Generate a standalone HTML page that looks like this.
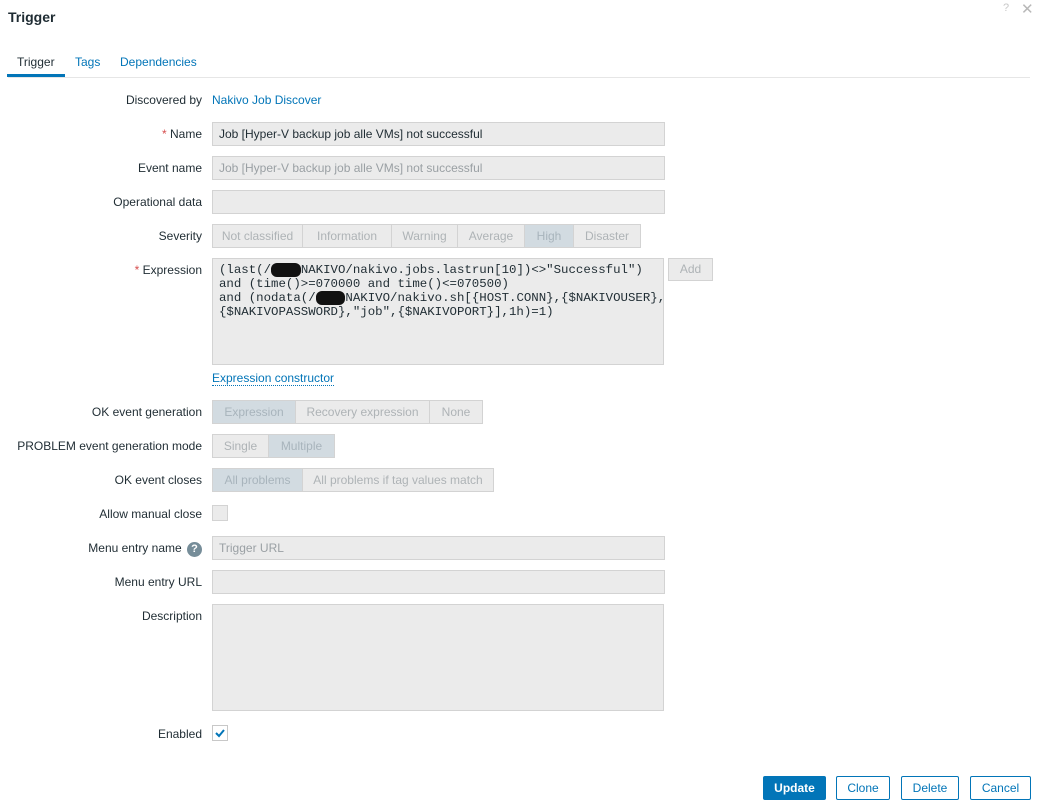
<!DOCTYPE html>
<html><head><style>
body{margin:0;width:1038px;height:809px;background:#fff;font-family:"Liberation Sans",sans-serif;font-size:12px;color:#1f2c33;position:relative;overflow:hidden}
.a{position:absolute}
.lbl{position:absolute;right:836px;text-align:right;white-space:nowrap;line-height:14px}
.in{position:absolute;left:212px;height:22px;background:#ebebeb;border:1px solid #d3d3d3;line-height:22px;padding-left:6px;box-sizing:content-box;width:445px}
.seg{position:absolute;display:flex;height:22px;border:1px solid #d3d3d3;background:#ebebeb}
.seg div{height:22px;line-height:22px;color:#aeb3b6;text-align:center;border-right:1px solid #d3d3d3;box-sizing:border-box}
.seg div:last-child{border-right:none}
.seg .s{background:#d2dbe1;color:#a8b4bc}
.btn{position:absolute;top:776px;height:24px;box-sizing:border-box;border:1px solid #0275b8;color:#0275b8;line-height:22px;text-align:center;font-size:12px;border-radius:2px}
.link{color:#0275b8}
</style></head><body>
<div class="a" style="left:8px;top:9px;font-size:14px;font-weight:bold;color:#1f2c33">Trigger</div>
<div class="a" style="left:1003px;top:2px;color:#c8c8c8;font-size:11px">?</div>
<div class="a" style="left:1021px;top:0px;color:#b8b8b8;font-size:15px">✕</div>
<div class="a" style="left:17px;top:55px">Trigger</div>
<div class="a link" style="left:75px;top:55px">Tags</div>
<div class="a link" style="left:120px;top:55px">Dependencies</div>
<div class="a" style="left:8px;top:77px;width:1022px;height:1px;background:#e6e6e6"></div>
<div class="a" style="left:7px;top:74px;width:58px;height:3px;background:#0275b8"></div>

<div class="lbl" style="top:93px">Discovered by</div>
<div class="a link" style="left:212px;top:93px">Nakivo Job Discover</div>

<div class="lbl" style="top:127px"><span style="color:#d64e4e">*</span> Name</div>
<div class="in" style="top:122px;color:#1f2c33">Job [Hyper-V backup job alle VMs] not successful</div>
<div class="lbl" style="top:161px">Event name</div>
<div class="in" style="top:156px;color:#9aa0a4">Job [Hyper-V backup job alle VMs] not successful</div>
<div class="lbl" style="top:195px">Operational data</div>
<div class="in" style="top:190px"></div>

<div class="lbl" style="top:229px">Severity</div>
<div class="seg" style="left:212px;top:224px">
<div style="width:90px">Not classified</div><div style="width:89px">Information</div><div style="width:66px">Warning</div><div style="width:67px">Average</div><div class="s" style="width:49px">High</div><div style="width:66px">Disaster</div></div>

<div class="lbl" style="top:263px"><span style="color:#d64e4e">*</span> Expression</div>
<div class="a" style="left:212px;top:258px;background:#ebebeb;border:1px solid #d3d3d3;font-family:'Liberation Mono',monospace;font-size:12.4px;line-height:14px;padding:4px 6px;box-sizing:border-box;width:452px;height:107px;white-space:pre;color:#1f2c33">(last(/<span style="background:#111;border-radius:6px">&nbsp;&nbsp;&nbsp;&nbsp;</span>NAKIVO/nakivo.jobs.lastrun[10])&lt;&gt;"Successful")
and (time()&gt;=070000 and time()&lt;=070500)
and (nodata(/<span style="background:#111;border-radius:6px">&nbsp;&nbsp;&nbsp;&nbsp;</span>NAKIVO/nakivo.sh[{HOST.CONN},{$NAKIVOUSER},
{$NAKIVOPASSWORD},"job",{$NAKIVOPORT}],1h)=1)</div>
<div class="a" style="left:668px;top:258px;width:45px;height:23px;box-sizing:border-box;border:1px solid #d3d3d3;background:#ebebeb;color:#aeb3b6;text-align:center;line-height:21px">Add</div>
<div class="a link" style="left:212px;top:371px;border-bottom:1px dotted #0275b8;line-height:14px">Expression constructor</div>

<div class="lbl" style="top:405px">OK event generation</div>
<div class="seg" style="left:212px;top:400px"><div class="s" style="width:83px">Expression</div><div style="width:134px">Recovery expression</div><div style="width:52px">None</div></div>
<div class="lbl" style="top:439px">PROBLEM event generation mode</div>
<div class="seg" style="left:212px;top:434px"><div style="width:56px">Single</div><div class="s" style="width:65px">Multiple</div></div>
<div class="lbl" style="top:473px">OK event closes</div>
<div class="seg" style="left:212px;top:468px"><div class="s" style="width:90px">All problems</div><div style="width:190px">All problems if tag values match</div></div>
<div class="lbl" style="top:507px">Allow manual close</div>
<div class="a" style="left:212px;top:505px;width:14px;height:14px;border:1px solid #d3d3d3;background:#ebebeb"></div>

<div class="lbl" style="top:541px">Menu entry name <span style="display:inline-block;width:15px;height:15px;border-radius:50%;background:#768d99;color:#fff;font-weight:bold;text-align:center;line-height:15px;font-size:11px;vertical-align:0px;margin-left:2px">?</span></div>
<div class="in" style="top:536px;color:#9aa0a4">Trigger URL</div>
<div class="lbl" style="top:575px">Menu entry URL</div>
<div class="in" style="top:570px"></div>
<div class="lbl" style="top:609px">Description</div>
<div class="a" style="left:212px;top:604px;width:450px;height:105px;background:#ebebeb;border:1px solid #d3d3d3"></div>
<div class="lbl" style="top:727px">Enabled</div>
<div class="a" style="left:212px;top:725px;width:14px;height:14px;border:1px solid #c8c8c8;background:#fff"><svg width="14" height="14"><path d="M3 7 L6 10 L11 4" stroke="#0275b8" stroke-width="2" fill="none"/></svg></div>

<div class="btn" style="left:763px;width:63px;background:#0275b8;color:#fff;font-weight:bold">Update</div>
<div class="btn" style="left:836px;width:54px">Clone</div>
<div class="btn" style="left:901px;width:58px">Delete</div>
<div class="btn" style="left:970px;width:61px">Cancel</div>
</body></html>
